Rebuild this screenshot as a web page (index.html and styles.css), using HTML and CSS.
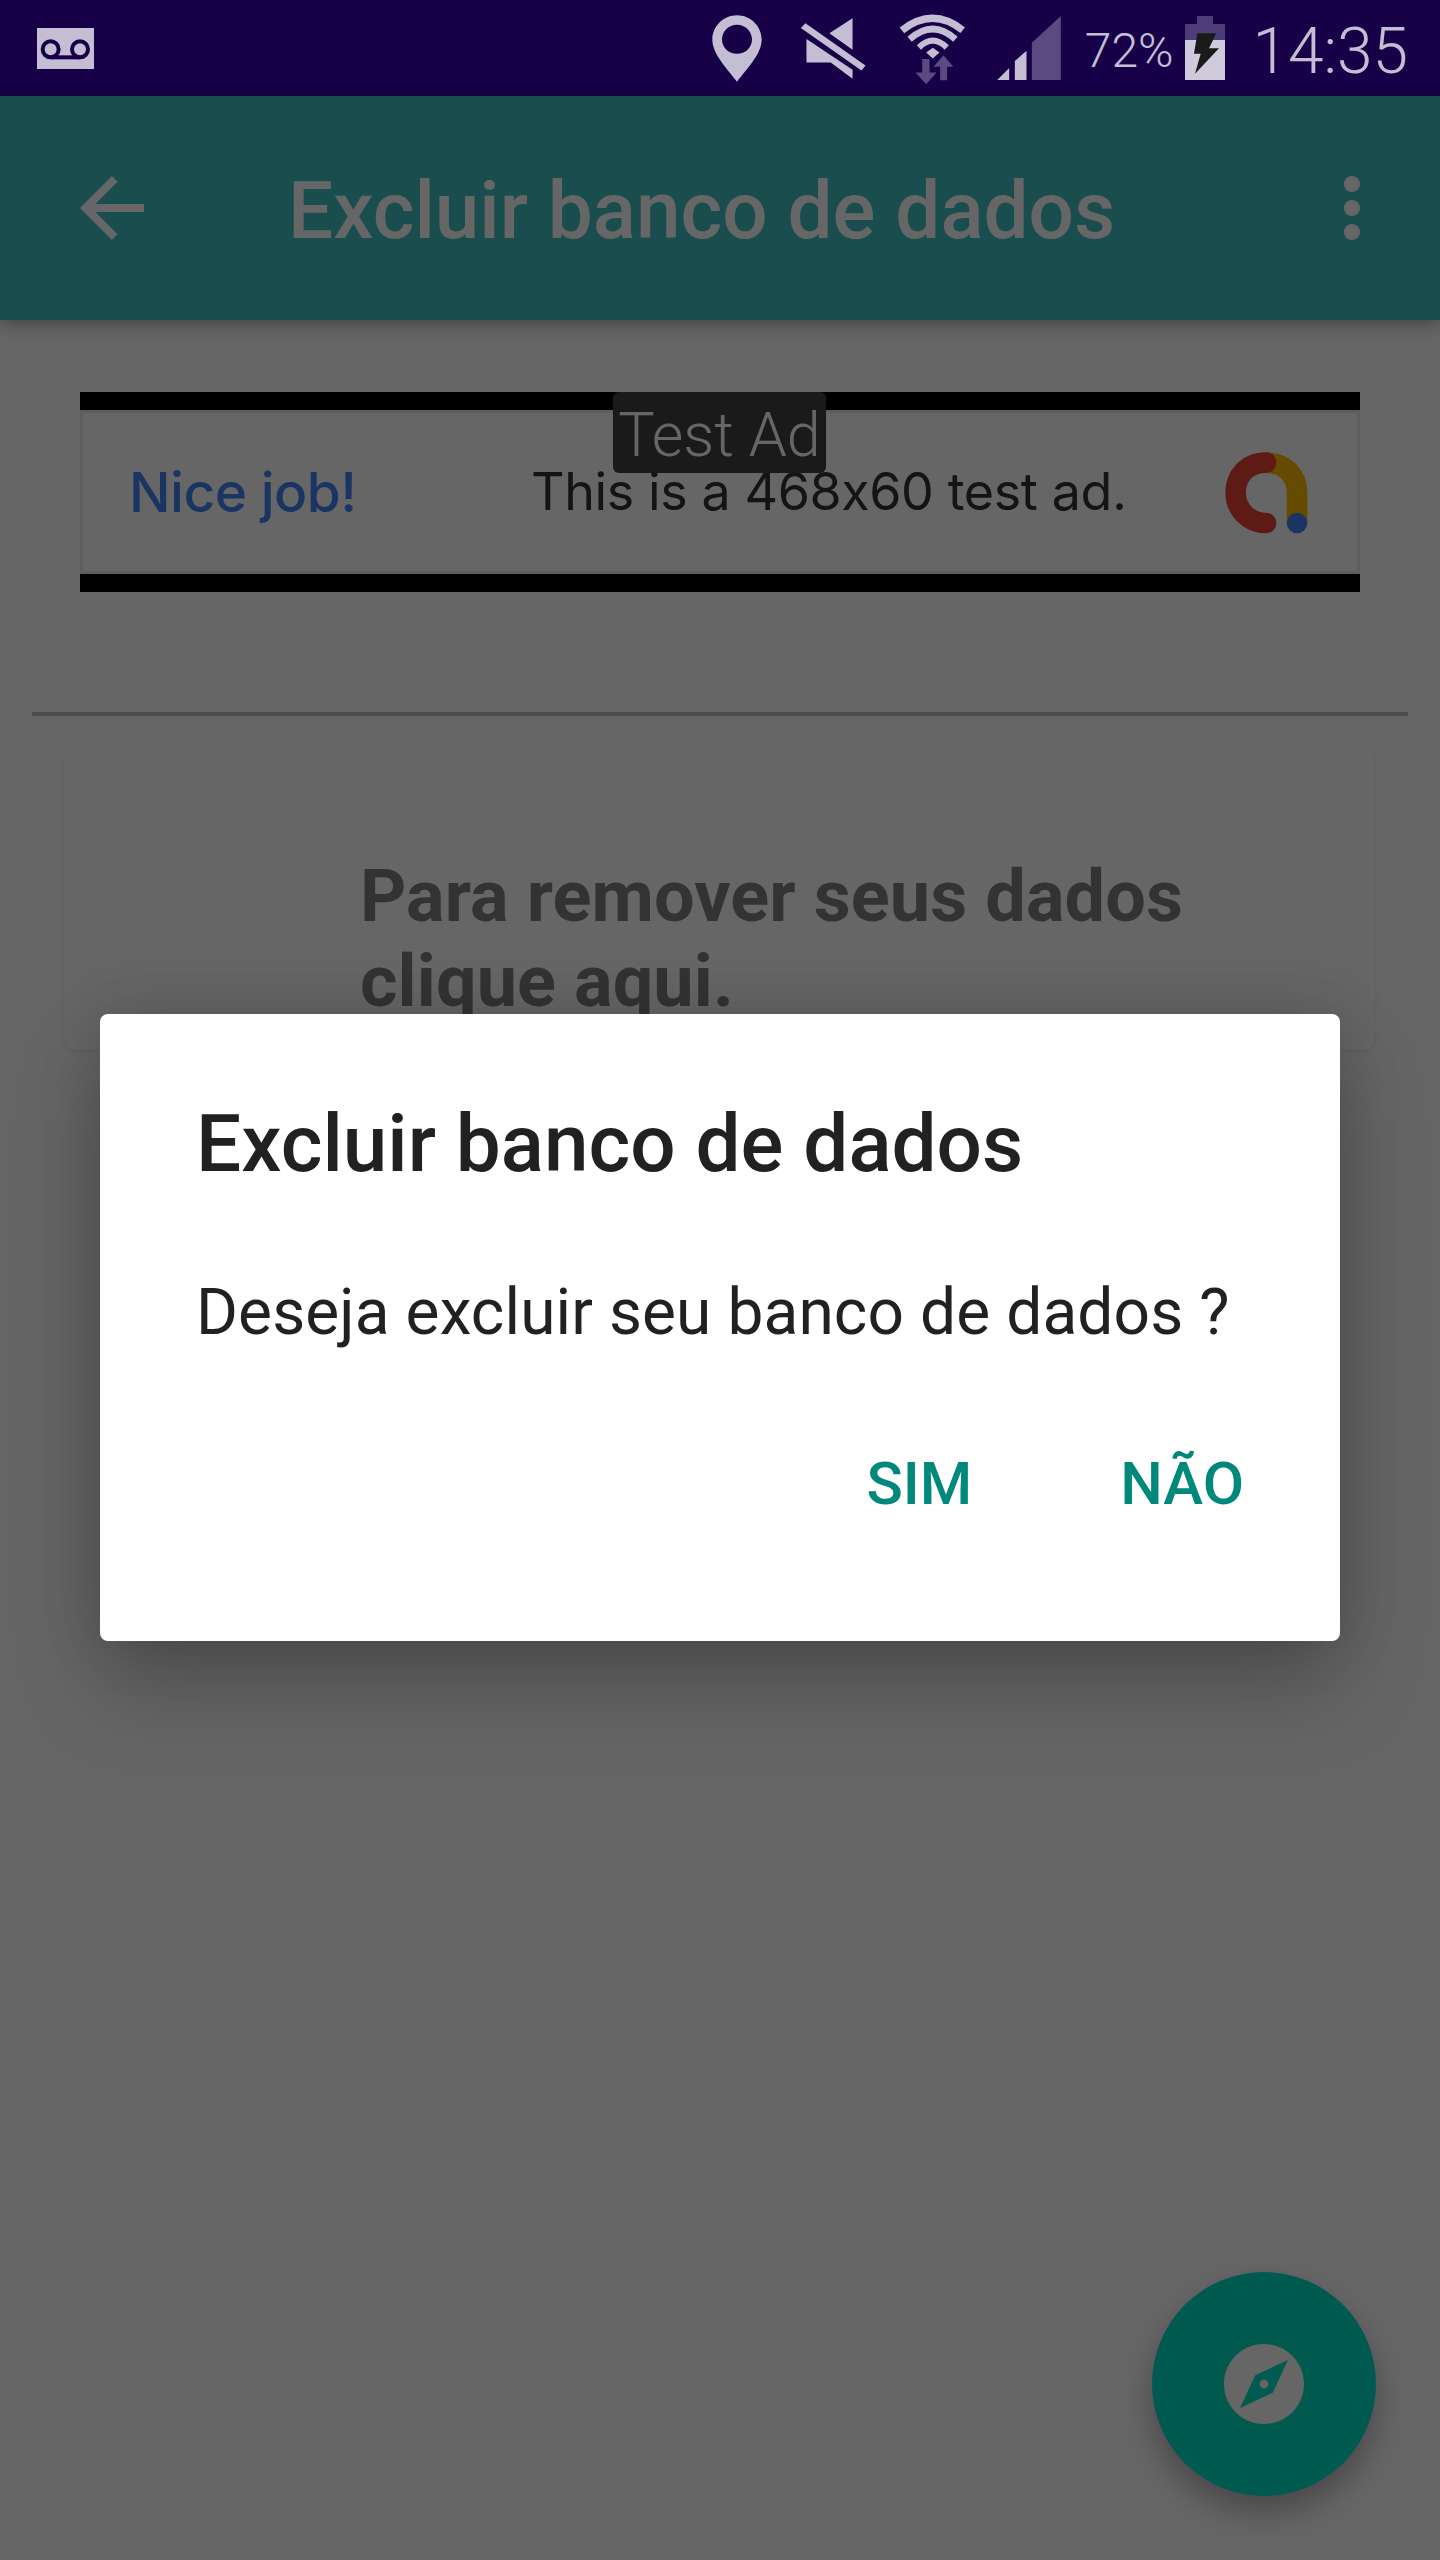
FILE: index.html
```html
<!DOCTYPE html>
<html lang="pt-BR">
<head>
  <meta charset="UTF-8">
  <title>Excluir banco de dados</title>
  <link rel="stylesheet" href="styles.css">
</head>
<body>
  <div class="phone">
    <div class="status-bar">
      <svg class="voicemail" viewBox="21 24 171 123">
        <rect x="21" y="24" width="171" height="123" fill="#c4bed4"/>
        <circle cx="62" cy="88" r="24" fill="none" stroke="#180048" stroke-width="12"/>
        <circle cx="150" cy="88" r="24" fill="none" stroke="#180048" stroke-width="12"/>
        <rect x="62" y="106" width="88" height="12" fill="#180048"/>
      </svg>
      <div class="status-right">
        <svg class="ic-pin" viewBox="38 44 150 200">
          <path fill="#c4bed4" fill-rule="evenodd" d="M113 44c41 0 74 33 74 73 0 44-45 88-74 127-29-39-74-83-74-127 0-40 33-73 74-73zm0 29c-25 0-45 20-45 44s20 43 45 43 45-19 45-43-20-44-45-44z"/>
        </svg>
        <svg class="ic-mute" viewBox="300 54 198 184">
          <path fill="#c4bed4" d="M458 55v95l-70-50zM319 117l139 93v27l-66-49h-73zM302 84l14-14 181 127-12 15z"/>
        </svg>
        <svg class="ic-wifi" viewBox="598 36 202 214">
          <g fill="none" stroke="#c4bed4">
            <path stroke-width="22" d="M607 85Q700 13 790 85"/>
            <path stroke-width="20" d="M630 112Q700 50 768 112"/>
            <path stroke-width="18" d="M658 137Q700 96 742 137"/>
          </g>
          <path fill="#c4bed4" d="M680 152l20-14 20 14-20 18z"/>
          <path fill="#5a4a80" d="M668 172h22v40h21l-31 36-32-36h20zM722 236v-41h-20l30-35 30 35h-19v41z"/>
        </svg>
        <svg class="ic-signal" viewBox="52 48 191 192">
          <path fill="#c4bed4" d="M52 240l36-36v36zM105 240v-57l35-31v88z"/>
          <path fill="#5a4a80" d="M156 240V128l87-80v192z"/>
        </svg>
        <span class="battery-pct">72%</span>
        <svg class="ic-battery" viewBox="618 45 120 192">
          <path fill="#4e3c78" d="M654 45h48v24h36v48H618V69h36z"/>
          <rect x="618" y="117" width="120" height="120" fill="#d0cbdc"/>
          <path fill="#1a1a1a" d="M655 97h57l-22 45h30l-72 76 17-60h-20z"/>
        </svg>
        <span class="clock">14:35</span>
      </div>
    </div>

    <div class="screen">
      <header class="app-bar">
        <svg class="bar-icon" viewBox="0 0 24 24"><path d="M20 11H7.83l5.59-5.59L12 4l-8 8 8 8 1.41-1.41L7.83 13H20v-2z"/></svg>
        <h1 class="app-title">Excluir banco de dados</h1>
        <svg class="bar-icon" viewBox="0 0 24 24"><path d="M12 8c1.1 0 2-.9 2-2s-.9-2-2-2-2 .9-2 2 .9 2 2 2zm0 2c-1.1 0-2 .9-2 2s.9 2 2 2 2-.9 2-2-.9-2-2-2zm0 6c-1.1 0-2 .9-2 2s.9 2 2 2 2-.9 2-2-.9-2-2-2z"/></svg>
      </header>

      <div class="ad-slot">
        <div class="ad">
          <span class="ad-tag">Test Ad</span>
          <span class="ad-nice">Nice job!</span>
          <span class="ad-text">This is a 468x60 test ad.</span>
          <svg class="ad-logo" viewBox="70 56 262 260">
            <path fill="none" stroke="#fbbc04" stroke-width="62" d="M200 96C255 96 293 135 293 185V278"/>
            <path fill="none" stroke="#ea4335" stroke-width="62" stroke-linecap="round" d="M200 96C140 96 108 140 108 186C108 235 145 278 200 278"/>
            <circle cx="293" cy="278" r="31" fill="#4285f4"/>
          </svg>
        </div>
      </div>

      <hr class="divider">

      <div class="card">
        <p class="card-text">Para remover seus dados clique aqui.</p>
      </div>

      <button class="fab">
        <svg viewBox="0 0 24 24"><path d="M12 10.9c-.61 0-1.1.49-1.1 1.1s.49 1.1 1.1 1.1c.61 0 1.1-.49 1.1-1.1s-.49-1.1-1.1-1.1zM12 2C6.48 2 2 6.48 2 12s4.48 10 10 10 10-4.48 10-10S17.52 2 12 2zm2.19 12.19L6 18l3.81-8.19L18 6l-3.81 8.19z"/></svg>
      </button>

      <div class="scrim">
        <div class="dialog">
          <h2 class="dialog-title">Excluir banco de dados</h2>
          <p class="dialog-text">Deseja excluir seu banco de dados ?</p>
          <div class="dialog-actions">
            <span class="dialog-btn">SIM</span>
            <span class="dialog-btn">NÃO</span>
          </div>
        </div>
      </div>
    </div>
  </div>
</body>
</html>
```

FILE: styles.css
```css
* {
  box-sizing: border-box;
}
body {
  margin: 0;
  font-family: Roboto, "Liberation Sans", sans-serif;
  background: #fff;
}
.phone {
  width: 1440px;
  height: 2560px;
  display: flex;
  flex-direction: column;
  overflow: hidden;
}

/* status bar */
.status-bar {
  height: 96px;
  flex: none;
  background: #180048;
  color: #c4bed4;
  display: flex;
  align-items: center;
  justify-content: space-between;
  padding: 0 32px 0 37px;
}
.voicemail {
  width: 57px;
  height: 41px;
  margin-top: 1px;
}
.status-right {
  display: flex;
  align-items: center;
}
.ic-pin {
  width: 50px;
  height: 67px;
  margin: 1px 0 0;
}
.ic-mute {
  width: 66px;
  height: 61px;
  margin: 1px 0 0 38px;
}
.ic-wifi {
  width: 67px;
  height: 71px;
  margin: 2px 0 0 33px;
}
.ic-signal {
  width: 64px;
  height: 64px;
  margin-left: 31px;
}
.battery-pct {
  font-size: 48px;
  font-weight: 300;
  margin: 6px 0 0 24px;
  line-height: 60px;
}
.ic-battery {
  width: 40px;
  height: 64px;
  margin: 0 0 0 11px;
}
.clock {
  font-size: 64px;
  font-weight: 300;
  margin: 8px 0 0 28px;
  line-height: 76px;
}

/* page under the dialog */
.screen {
  position: relative;
  flex: 1;
  background: #fff;
}
.app-bar {
  height: 224px;
  background: #41c0c0;
  color: #fff;
  display: flex;
  align-items: center;
  padding: 0 40px 0 64px;
  box-shadow: 0 4px 16px rgba(0, 0, 0, 0.35);
}
.bar-icon {
  width: 96px;
  height: 96px;
  fill: #fff;
  flex: none;
}
.app-title {
  flex: 1;
  margin: 6px 0 0 128px;
  font-size: 80px;
  font-weight: 500;
  line-height: 96px;
}
.ad-slot {
  margin: 72px 80px 0;
  height: 200px;
  background: #000;
  padding: 18px 0;
}
.ad {
  position: relative;
  height: 164px;
  background: #fff;
  border: 3px solid #e4ecf0;
  display: flex;
  align-items: center;
  padding-left: 46px;
}
.ad-tag {
  position: absolute;
  left: 530px;
  top: -21px;
  width: 213px;
  height: 81px;
  background: #414141;
  border-radius: 6px;
  color: #fff;
  font-size: 61px;
  font-weight: 300;
  line-height: 86px;
  text-align: center;
}
.ad-nice {
  font-family: Inter, Roboto, sans-serif;
  font-size: 55px;
  font-weight: 500;
  letter-spacing: -0.5px;
  line-height: 40px;
  color: #4285f4;
  width: 402px;
}
.ad-text {
  font-family: Inter, Roboto, sans-serif;
  font-size: 52px;
  letter-spacing: -0.4px;
  line-height: 40px;
  color: #333;
  flex: 1;
}
.ad-logo {
  width: 87px;
  height: 87px;
  margin-right: 47px;
}
.divider {
  margin: 120px 32px 0;
  height: 4px;
  border: 0;
  background: #c0c0c0;
}
.card {
  margin: 32px 65px 0 64px;
  height: 302px;
  background: #fff;
  border-radius: 12px;
  box-shadow: 0 1px 4px rgba(0, 0, 0, 0.09);
  padding: 106px 100px 0 296px;
}
.card-text {
  margin: 0;
  font-size: 72px;
  font-weight: 700;
  letter-spacing: 0.1px;
  line-height: 85px;
  color: #808080;
}
.fab {
  position: absolute;
  left: 1152px;
  top: 2176px;
  width: 224px;
  height: 224px;
  border: 0;
  padding: 0;
  border-radius: 50%;
  background: #00e1c8;
  box-shadow: 0 16px 32px rgba(0, 0, 0, 0.3);
  display: flex;
  align-items: center;
  justify-content: center;
}
.fab svg {
  width: 96px;
  height: 96px;
  fill: #fff;
}

/* dialog */
.scrim {
  position: absolute;
  inset: 0;
  background: rgba(0, 0, 0, 0.6);
  padding: 918px 100px 0;
}
.dialog {
  height: 627px;
  background: #fff;
  border-radius: 8px;
  box-shadow: 0 48px 90px rgba(0, 0, 0, 0.22), 0 0 60px rgba(0, 0, 0, 0.15);
  padding: 82px 96px 0 96px;
}
.dialog-title {
  margin: 0;
  font-size: 80px;
  font-weight: 500;
  line-height: 96px;
  color: #212121;
}
.dialog-text {
  margin: 83px 0 0;
  font-size: 64px;
  letter-spacing: 0.1px;
  line-height: 76px;
  color: #212121;
}
.dialog-actions {
  display: flex;
  justify-content: flex-end;
  gap: 148px;
  margin-top: 97px;
}
.dialog-btn {
  font-size: 60px;
  font-weight: 500;
  line-height: 72px;
  color: #00897b;
}
```
